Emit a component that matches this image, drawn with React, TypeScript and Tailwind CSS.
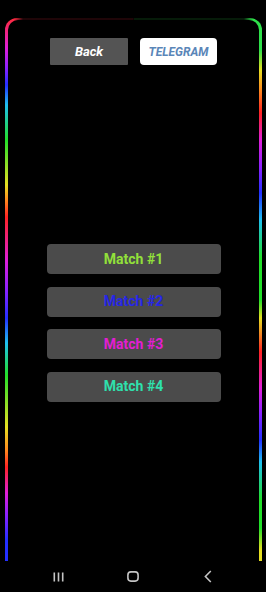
const matches = [
  { label: "Match #1", color: "text-[#92e03a]" },
  { label: "Match #2", color: "text-[#2626e6]" },
  { label: "Match #3", color: "text-[#e21ed2]" },
  { label: "Match #4", color: "text-[#2fe0ad]" },
];

// neon rainbow frame: left + right strips, top line dimmed except near corners
const frameBg =
  "[background-image:linear-gradient(to_right,transparent_0,transparent_9px,rgba(0,0,0,0.88)_18px,rgba(0,0,0,0.88)_calc(100%_-_18px),transparent_calc(100%_-_9px)),linear-gradient(to_bottom,#ff2a3a_0px,#e01fd8_30px,#8a22ff_50px,#2430ff_67px,#1fc0f0_87px,#22e02a_122px,#e6e022_167px,#ff8a1e_182px,#ff2424_199px,#e01fd8_242px,#8a22ff_272px,#2430ff_300px,#1fc0f0_325px,#22e02a_357px,#e6e022_409px,#ff8a1e_432px,#ff2424_449px,#e01fd8_475px,#8a22ff_497px,#2430ff_522px,#2430ff_543px),linear-gradient(to_bottom,#2ee04a_0px,#2ee04a_32px,#e6e022_52px,#ff8a1e_72px,#ff2424_95px,#e01fd8_122px,#8a22ff_150px,#2430ff_175px,#1fc0f0_202px,#22e02a_240px,#22e02a_282px,#e6e022_300px,#ff2424_334px,#e01fd8_370px,#8a22ff_395px,#2430ff_422px,#1fc0f0_444px,#22e02a_482px,#22e02a_510px,#e6e022_532px,#e6e022_543px)] [background-size:100%_3px,50%_100%,50%_100%] [background-position:left_top,left_top,right_top] bg-no-repeat";

function NavIcons() {
  return (
    <div className="flex h-[31px] items-center justify-center">
      <div className="flex w-[75px] justify-center">
        <svg width="11" height="10" viewBox="0 0 11 10">
          <rect x="0.5" y="0.5" width="1.6" height="9" fill="#c4c4c4" />
          <rect x="4.7" y="0.5" width="1.6" height="9" fill="#c4c4c4" />
          <rect x="8.9" y="0.5" width="1.6" height="9" fill="#c4c4c4" />
        </svg>
      </div>
      <div className="flex w-[75px] justify-center">
        <svg width="12" height="11" viewBox="0 0 12 11">
          <rect x="0.9" y="0.9" width="10.2" height="9.2" rx="3" fill="none" stroke="#c4c4c4" strokeWidth="1.6" />
        </svg>
      </div>
      <div className="flex w-[75px] justify-center">
        <svg width="8" height="13" viewBox="0 0 8 13">
          <path d="M6.8 1 L1.4 6.5 L6.8 12" fill="none" stroke="#c4c4c4" strokeWidth="1.6" />
        </svg>
      </div>
    </div>
  );
}

export default function App() {
  return (
    <div className="flex h-[592px] w-[266px] flex-col bg-black font-['Roboto','Liberation_Sans',sans-serif]">
      <div className="h-[18px] shrink-0" />

      <div className={`ml-[5px] h-[543px] w-[257px] shrink-0 rounded-t-[12px] px-[3px] pt-[2px] ${frameBg}`}>
        <div className="flex h-full flex-col items-center rounded-t-[10px] bg-black">
          {/* top buttons */}
          <div className="mt-[18px] flex gap-3">
            <button
              type="button"
              className="flex h-[27px] w-[78px] items-center justify-center rounded-[1px] bg-[#545454] text-[13px] font-bold italic text-white"
            >
              Back
            </button>
            <button
              type="button"
              className="flex h-[27px] w-[77px] items-center justify-center rounded-[4px] bg-white text-[12px] font-bold italic text-[#5a86b8]"
            >
              TELEGRAM
            </button>
          </div>

          {/* match list */}
          <div className="mt-[179px] flex flex-col gap-[12.5px]">
            {matches.map((m) => (
              <button
                key={m.label}
                type="button"
                className={`flex h-[30px] w-[174px] items-center justify-center rounded-[4px] bg-[#4b4b4b] text-[14px] font-bold ${m.color}`}
              >
                {m.label}
              </button>
            ))}
          </div>
        </div>
      </div>

      <NavIcons />
    </div>
  );
}
